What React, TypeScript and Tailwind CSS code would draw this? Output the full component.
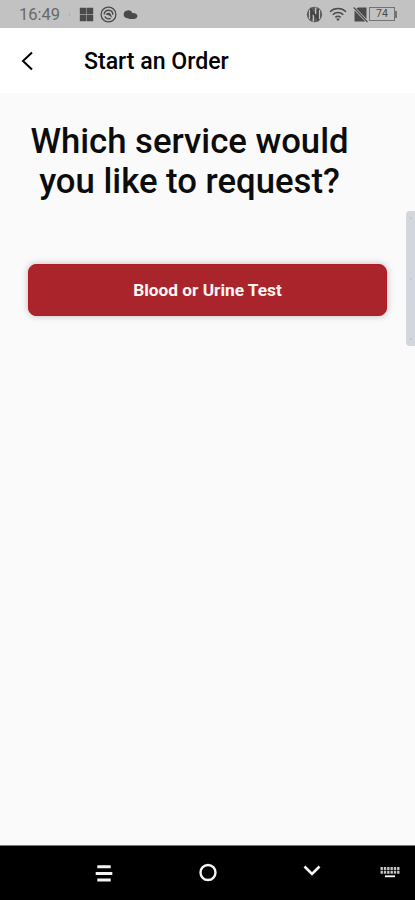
function StatusBar() {
  return (
    <header className="flex h-7 shrink-0 items-center justify-between bg-[#c2c2c2] pr-[18px] pl-[19px] text-[#4a4a4a]">
      <div className="flex items-center">
        <span className="w-[41px] pt-[2px] text-[16.5px] leading-7 whitespace-nowrap text-[#686868]">16:49</span>
        <span className="ml-[9px] h-[3px] w-px bg-[#acacac]" />
        {/* four tiles */}
        <svg className="ml-[9px]" width="15" height="15" viewBox="0 0 15 15" fill="currentColor">
          <path d="M.8.8h6.300v6.300H.8zM7.900.8h6.300v6.300H7.900zM.8 7.900h6.300v6.300H.8zM7.900 7.900h6.300v6.300H7.900z" />
          <path d="M7 1h1v13H7zM1 7h13v1H1z" opacity=".4" />
        </svg>
        <svg className="ml-[6px]" width="17" height="17" viewBox="0 0 17 17" fill="none" stroke="currentColor">
          <circle cx="8.500" cy="8.500" r="7.400" strokeWidth="1.300" />
          <path d="M4.200 8.500C4.200 5.800 6.300 4.200 8.700 4.200c2.600 0 4.300 2 4.100 4.600" strokeWidth="1.500" />
          <path d="M5.800 8.800C6.500 6.500 9.500 6 10.700 8l1.500 3.800-3.400-2.600z" fill="currentColor" stroke="none" />
          <path d="M4.800 10.500c1 2.200 3.800 3 5.800 1.800" strokeWidth="1.400" />
        </svg>
        <svg className="ml-[6px]" width="15" height="11" viewBox="0 0 15 11" fill="currentColor">
          <path d="M3.600 8.900A3.400 3.400 0 0 1 .7 5.300C.7 2.900 2.600 1.300 4.800 1.400c2.100-.4 3.900.7 4.400 2.500 2.900-.2 5.200 1.100 5.200 3.100 0 1.900-1.800 2.900-3.800 2.900-2.400 0-4.900 0-7-1z" />
        </svg>
      </div>

      <div className="flex items-center">
        {/* nfc */}
        <svg width="17" height="17" viewBox="0 0 17 17" fill="none">
          <circle cx="8.500" cy="8.500" r="7.700" fill="#5c5c5c" />
          <path d="M7.300 15.500V9M9.700 1.500V8" stroke="#c2c2c2" strokeWidth="1.400" />
          <path d="M3.500 4v9M13.500 4v9" stroke="#c2c2c2" strokeWidth="1.100" />
          <path d="M5.400 13.500V4.200l6.200 8.600V3.500" stroke="#444" strokeWidth="1.900" />
        </svg>
        <svg className="ml-[6px]" width="18" height="15" viewBox="0 0 18 15" fill="none" stroke="currentColor" strokeWidth="1.500">
          <path d="M1 4.700a11.500 11.500 0 0 1 16 0M3.700 7.700a7.600 7.600 0 0 1 10.600 0M6.300 10.400a4 4 0 0 1 5.400 0" />
          <path d="M7.100 11.600h3.800L9 14.200z" fill="currentColor" stroke="none" />
        </svg>
        {/* no sim */}
        <svg className="ml-[6px]" width="16" height="17" viewBox="0 0 16 17">
          <path d="M5 1.500h8.500V13L3.500 2.500zM1.500 4.500 12.300 15.500H1.500z" fill="currentColor" />
          <path d="M.7 1.500 14.500 16" stroke="currentColor" strokeWidth="1.100" />
        </svg>
        <div className="flex items-center">
          <span className="flex h-[14px] w-[26px] items-center justify-center border-[1.500px] border-[#737373] pt-px text-[10.500px] leading-none">
            74
          </span>
          <span className="h-[7px] w-[2px] bg-[#737373]" />
        </div>
      </div>
    </header>
  );
}

function TitleBar() {
  return (
    <div className="flex h-[65px] shrink-0 items-center bg-white pl-[20px]">
      <button aria-label="Back" className="text-black">
        <svg width="14" height="20" viewBox="0 0 14 20" fill="none" stroke="currentColor" strokeWidth="2">
          <path d="M12 1.500 3 10l9 8.500" />
        </svg>
      </button>
      <h1 className="ml-[50px] pt-[3px] text-[23.100px] leading-8 font-medium whitespace-nowrap text-black">Start an Order</h1>
    </div>
  );
}

function NavBar() {
  return (
    <nav className="flex h-[55px] shrink-0 items-center border-t border-[#777] bg-black pl-[95px] text-[#f4f4f4]">
      <svg width="18" height="19" viewBox="0 0 18 19" fill="currentColor">
        <path d="M2.300 1.300h13.400v3H2.300zM.7 8h16.600v3H.7zM2.300 14.500h13.400v3H2.300z" />
      </svg>
      <svg className="ml-[85px]" width="20" height="20" viewBox="0 0 20 20" fill="none" stroke="currentColor" strokeWidth="2.400">
        <circle cx="10" cy="9.500" r="7.500" />
      </svg>
      <svg className="mb-[5px] ml-[85px]" width="18" height="12" viewBox="0 0 18 12" fill="none" stroke="currentColor" strokeWidth="2.600">
        <path d="m1.500 1.500 7.500 7.500 7.500-7.500" />
      </svg>
      {/* keyboard switcher */}
      <svg className="mb-[2px] ml-[59px]" width="20" height="12" viewBox="0 0 20 12">
        <path d="M.5 2.500h19M.5 6.300h19" stroke="#c4c4c4" strokeWidth="3" strokeDasharray="2.400 0.920" />
        <path d="M5 10.300h10" stroke="#fff" strokeWidth="1.800" />
      </svg>
    </nav>
  );
}

export default function App() {
  return (
    <div className="relative flex h-[900px] w-[415px] flex-col overflow-hidden bg-[#fafafa] font-['Roboto',sans-serif]">
      <StatusBar />
      <TitleBar />

      <main className="flex-1 px-7 pt-7">
        <h2 className="w-[323px] text-center text-[34.700px] leading-[40px] font-medium whitespace-nowrap text-[#0c0c0c]">
          Which service would
          <br />
          you like to request?
        </h2>
        <button className="mt-[63px] flex h-[52px] w-full items-center justify-center rounded-lg border border-[#b51a22] bg-[#aa242b] pt-px text-[17.300px] font-bold text-[#fff4f4] shadow-[0_0_7px_rgba(0,0,0,0.25)]">
          Blood or Urine Test
        </button>
      </main>

      <NavBar />

      {/* edge panel handle */}
      <div className="absolute top-[211px] right-0 flex h-[135px] w-[9px] flex-col items-center justify-between rounded-l-[4px] bg-[#d2d7dd] py-[6px]">
        <span className="size-[2px] rounded-full bg-[#b9c2cc]" />
        <span className="size-[2px] rounded-full bg-[#b9c8d2]" />
        <span className="size-[2px] rounded-full bg-[#b9c2cc]" />
      </div>
    </div>
  );
}
